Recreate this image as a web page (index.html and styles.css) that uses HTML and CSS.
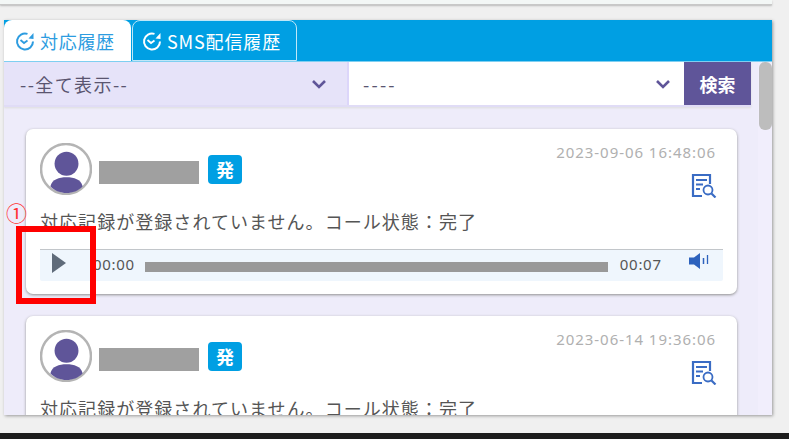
FILE: index.html
```html
<!DOCTYPE html>
<html lang="ja">
<head>
<meta charset="utf-8">
<title>対応履歴</title>
<link rel="stylesheet" href="styles.css">
</head>
<body>
<svg class="defs" width="0" height="0">
  <symbol id="clock" viewBox="0 0 20 20">
    <path d="M12.500 2.900A8 8 0 1 0 18 10.500" fill="none" stroke="currentColor" stroke-width="2"/>
    <path d="M13.500 7.500l5-5.500v6z" fill="currentColor"/>
    <path d="M5.500 9l3.500 3 3.500-2.500" fill="none" stroke="currentColor" stroke-width="1.800"/>
  </symbol>
  <symbol id="person" viewBox="0 0 50 50">
    <circle cx="25" cy="25" r="24" fill="#fff" stroke="#b4b4b4" stroke-width="2.400"/>
    <circle cx="25.500" cy="20" r="11.500" fill="#5f5599"/>
    <path d="M10 41.500C12 35 18 33 25.500 33S39 35 41 41.500C37 46 31 48 25.500 48S14 46 10 41.500z" fill="#5f5599"/>
  </symbol>
  <symbol id="doc" viewBox="0 0 26 25">
    <path d="M11 23H2V2h17v9" fill="none" stroke="#3a6cc4" stroke-width="2.200"/>
    <path d="M5 7h11M5 11.500h7M5 16h4" stroke="#3a6cc4" stroke-width="1.800"/>
    <circle cx="17" cy="17" r="4.500" fill="none" stroke="#3a6cc4" stroke-width="1.800"/>
    <path d="M20.500 20.500l4 4" stroke="#3a6cc4" stroke-width="2.200"/>
  </symbol>
</svg>

<div class="topbar"></div>

<main class="panel">
  <nav class="tabs">
    <div class="tab tab-active"><svg class="tab-icon"><use href="#clock"/></svg>対応履歴</div>
    <div class="tab tab-idle"><svg class="tab-icon"><use href="#clock"/></svg>SMS配信履歴</div>
  </nav>

  <div class="scroll-area">
    <div class="filters">
      <div class="select select-main"><span>--全て表示--</span><svg class="chev" viewBox="0 0 16 10"><path d="M2 2l6 6 6-6" fill="none" stroke="#5f5599" stroke-width="2.600"/></svg></div>
      <div class="select select-sub"><span>----</span><svg class="chev" viewBox="0 0 16 10"><path d="M2 2l6 6 6-6" fill="none" stroke="#5f5599" stroke-width="2.600"/></svg></div>
      <div class="search">検索</div>
    </div>

    <div class="cards">
      <article class="card">
        <div class="card-head">
          <svg class="avatar"><use href="#person"/></svg>
          <div class="masked"></div>
          <div class="badge">発</div>
          <div class="meta">
            <div class="stamp">2023-09-06 16:48:06</div>
            <svg class="doc"><use href="#doc"/></svg>
          </div>
        </div>
        <p class="note">対応記録が登録されていません。コール状態：完了</p>
        <div class="player">
          <svg class="play" viewBox="0 0 14 20"><path d="M0 0l14 10L0 20z" fill="#5f6b7a"/></svg>
          <span class="time time-start">00:00</span>
          <div class="track"></div>
          <span class="time time-end">00:07</span>
          <svg class="volume" viewBox="0 0 20 16"><path d="M0 4.500h5L11 0v16L5 11.500H0z" fill="#2d62bd"/><path d="M14.500 5v6" stroke="#2d62bd" stroke-width="1.500"/><path d="M18.500 2v9" stroke="#2d62bd" stroke-width="1.300"/></svg>
        </div>
      </article>

      <article class="card">
        <div class="card-head">
          <svg class="avatar"><use href="#person"/></svg>
          <div class="masked"></div>
          <div class="badge">発</div>
          <div class="meta">
            <div class="stamp">2023-06-14 19:36:06</div>
            <svg class="doc"><use href="#doc"/></svg>
          </div>
        </div>
        <p class="note">対応記録が登録されていません。コール状態：完了</p>
      </article>
    </div>

    <div class="scrollbar"><div class="thumb"></div></div>
  </div>

  <div class="marker">①</div>
  <div class="highlight"></div>
</main>

<div class="bottombar"></div>
</body>
</html>
```

FILE: styles.css
```css
* { box-sizing: border-box; }
html, body { margin: 0; height: 100%; }
body {
  width: 789px;
  height: 439px;
  overflow: hidden;
  background: #f0f0f0;
  font-family: "Noto Sans CJK JP", "Noto Sans", sans-serif;
  display: flex;
  flex-direction: column;
}
.defs { position: absolute; }
.topbar {
  flex: none;
  width: 772px;
  height: 5px;
  background: #f3f7f6;
  border-bottom: 1px solid #c8c8c8;
  box-shadow: 0 1px 2px #bbb;
}
.panel {
  position: relative;
  flex: none;
  margin: 15px 0 0 4px;
  width: 768px;
  height: 395px;
  box-shadow: 1px 1px 3px #999;
  display: flex;
  flex-direction: column;
  background: #eeecfa;
}
.tabs {
  flex: none;
  height: 42px;
  background: #009fe3;
  border-bottom: 1px solid #7fcff1;
  display: flex;
  gap: 1px;
}
.tab {
  height: 41px;
  border-radius: 8px 8px 0 0;
  display: flex;
  align-items: center;
  font-size: 18px;
  letter-spacing: 0.7px;
  padding-left: 11px;
}
.tab-active { width: 127px; background: #fff; color: #2d9ce0; }
.tab-idle { width: 165px; border: 1px solid #bfe7f8; color: #fff; padding-left: 9px; letter-spacing: 0.85px; }
.tab-icon { width: 20px; height: 20px; margin-right: 5px; flex: none; }
.scroll-area {
  flex: 1;
  position: relative;
  overflow: hidden;
  min-height: 0;
}
.filters {
  height: 45px;
  width: 747px;
  display: flex;
  border-bottom: 2px solid #e0dcf6;
  box-shadow: 0 1px 2px #ddd;
}
.select {
  display: flex;
  align-items: center;
  justify-content: space-between;
  font-size: 18px;
  color: #5a5570;
}
.select-main {
  width: 345px;
  background: #e6e3f9;
  border-right: 2px solid #dcd6fa;
  padding: 0 20px 0 16px;
  letter-spacing: 1.4px;
}
.select-sub {
  width: 335px;
  background: #fff;
  padding: 0 13px 0 14px;
  letter-spacing: 2.200px;
}
.chev { width: 16px; height: 10px; }
.search {
  width: 67px;
  background: #5f5599;
  color: #fff;
  font-size: 18px;
  font-weight: 700;
  display: flex;
  align-items: center;
  justify-content: center;
}
.cards {
  width: 754px;
  padding: 22px 0 0 22px;
  display: flex;
  flex-direction: column;
  gap: 22px;
}
.card {
  flex: none;
  width: 711px;
  height: 165px;
  background: #fff;
  border-radius: 7px;
  box-shadow: 0 1px 3px #8f8f8f;
  padding: 14px 14px 0;
}
.card-head {
  display: flex;
  align-items: flex-start;
  height: 52px;
}
.avatar { width: 52px; height: 52px; flex: none; }
.masked {
  width: 100px;
  height: 23px;
  margin: 18px 9px 0 7px;
  background: #a0a0a0;
  flex: none;
}
.badge {
  width: 34px;
  height: 29px;
  margin-top: 12px;
  border-radius: 4px;
  background: #009fe3;
  color: #fff;
  font-size: 18px;
  font-weight: 700;
  text-align: center;
  line-height: 28px;
}
.meta {
  margin-left: auto;
  margin-right: 7px;
  display: flex;
  flex-direction: column;
  align-items: flex-end;
}
.stamp {
  font-family: "Noto Sans", sans-serif;
  font-size: 15px;
  line-height: 18px;
  color: #b0b0b0;
  letter-spacing: 0.95px;
}
.doc { width: 26px; height: 25px; margin-top: 12px; margin-right: -1px; }
.note {
  margin: 14px 0 0;
  font-size: 18px;
  line-height: 24px;
  letter-spacing: 1.05px;
  color: #555;
  white-space: nowrap;
}
.player {
  margin-top: 16px;
  width: 683px;
  height: 32px;
  background: #eff6fd;
  border-top: 1px solid #c2c6ca;
  border-radius: 0 0 2px 2px;
  display: flex;
  align-items: center;
  padding: 0 14px 5px 12px;
}
.play { width: 14px; height: 20px; flex: none; }
.time {
  font-family: "Noto Sans", sans-serif;
  font-size: 15px;
  color: #555;
  letter-spacing: 0.7px;
  flex: none;
  position: relative;
  top: 1px;
}
.time-start { margin-left: 27px; margin-right: 10px; }
.time-end { margin-left: 12px; }
.track { flex: none; width: 463px; height: 10px; margin-top: 8px; background: #999; }
.volume { width: 20px; height: 16px; margin-left: auto; flex: none; margin-top: -5px; }
.scrollbar {
  position: absolute;
  top: 0;
  right: 0;
  bottom: 0;
  width: 14px;
  background: #f1eefc;
}
.thumb {
  height: 68px;
  width: 13px;
  margin-left: 1px;
  border-radius: 6px;
  background: #bdbdbd;
}
.marker {
  position: absolute;
  left: 2px;
  top: 177px;
  font-size: 21px;
  line-height: 30px;
  color: #f33;
}
.highlight {
  position: absolute;
  left: 12px;
  top: 206px;
  width: 80px;
  height: 78px;
  border: 6px solid #f00;
}
.bottombar {
  flex: none;
  height: 6px;
  margin-top: 18px;
  background: #1c1c1c;
}
```
